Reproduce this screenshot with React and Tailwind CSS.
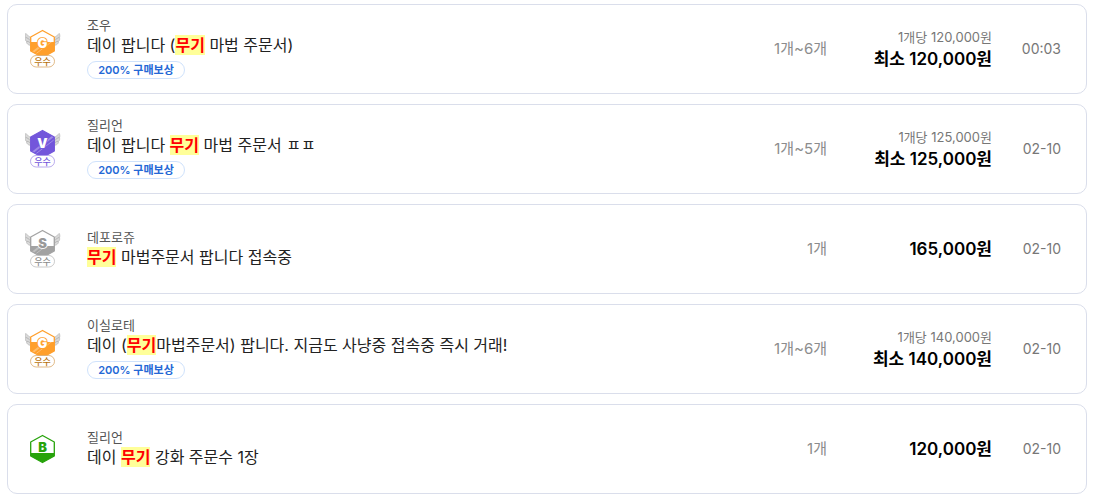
const LISTINGS = [
  {
    id: 1,
    grade: "gold",
    seller: "조우",
    title: ["데이 팝니다 (", "무기", " 마법 주문서)"],
    reward: true,
    quantity: "1개~6개",
    unitPrice: "1개당 120,000원",
    price: "최소 120,000원",
    date: "00:03",
  },
  {
    id: 2,
    grade: "vip",
    seller: "질리언",
    title: ["데이 팝니다 ", "무기", " 마법 주문서 ㅍㅍ"],
    reward: true,
    quantity: "1개~5개",
    unitPrice: "1개당 125,000원",
    price: "최소 125,000원",
    date: "02-10",
  },
  {
    id: 3,
    grade: "silver",
    seller: "데포로쥬",
    title: ["", "무기", " 마법주문서 팝니다 접속중"],
    quantity: "1개",
    price: "165,000원",
    date: "02-10",
  },
  {
    id: 4,
    grade: "gold",
    seller: "이실로테",
    title: ["데이 (", "무기", "마법주문서) 팝니다. 지금도 사냥중 접속중 즉시 거래!"],
    reward: true,
    quantity: "1개~6개",
    unitPrice: "1개당 140,000원",
    price: "최소 140,000원",
    date: "02-10",
  },
  {
    id: 5,
    grade: "bronze",
    seller: "질리언",
    title: ["데이 ", "무기", " 강화 주문수 1장"],
    quantity: "1개",
    price: "120,000원",
    date: "02-10",
  },
];

// level = y where the solid part of the hexagon starts
const GRADES = {
  gold: { letter: "G", color: "#ff9f2b", ink: "#fff", outline: "#ff9f2b", label: "#b8730f", line: "#d9a869", level: 13, excellent: true },
  vip: { letter: "V", color: "#7357db", ink: "#fff", outline: "#7357db", label: "#7357db", line: "#a796e8", level: 0, excellent: true },
  silver: { letter: "S", color: "#a3a3a3", ink: "#999", outline: "#fff", label: "#8c8c8c", line: "#bdbdbd", level: 17, excellent: true },
  bronze: { letter: "B", color: "#27a30b", ink: "#27a30b", outline: "#fff", level: 19 },
};

const HEXAGON = "M17.5 1.5 L29.3 8 V22 L17.5 28.5 L5.7 22 V8 Z";

const Wing = () => (
  <g>
    <path
      d="M7 16.5 C3 16.5 1.2 14.2 1.6 12.6 C.4 11.8 .1 10 .5 8.8 C-.1 7.2 .2 5.2 .8 4.4 C1.8 6.4 4.8 7 6.2 9.6 Z"
      fill="#d9d9d9"
      stroke="#b3b3b3"
      strokeWidth="0.7"
    />
    <path d="M.8 8.4 Q3.2 9.2 4.8 11 M1.7 12.2 Q3.8 12.4 5 13.6" fill="none" stroke="#a6a6a6" strokeWidth="0.7" />
  </g>
);

const GradeBadge = ({ id, grade }) => {
  const { letter, color, ink, outline, label, line, level, excellent } = GRADES[grade];
  const hexClip = `hex-${id}`;
  const lowerClip = `lower-${id}`;

  return (
    <svg
      viewBox={excellent ? "0 0 36 40" : "0 -5 36 40"}
      className="h-10 w-9 shrink-0"
      role="img"
      aria-label={`${letter} 등급`}
    >
      <clipPath id={hexClip}>
        <path d={HEXAGON} />
      </clipPath>
      <clipPath id={lowerClip}>
        <rect x="0" y={level} width="36" height="30" />
      </clipPath>

      {excellent && (
        <>
          <Wing />
          <g transform="matrix(-1 0 0 1 35 0)">
            <Wing />
          </g>
        </>
      )}

      <path d={HEXAGON} fill="#fff" />
      <g clipPath={`url(#${hexClip})`}>
        <rect x="0" y={level} width="36" height="30" fill={color} />
        {excellent && (
          <g clipPath={`url(#${lowerClip})`} stroke="#fff" opacity="0.3">
            <path d="M3 27 L31 5" strokeWidth="2" />
            <path d="M8 27 L34 7" strokeWidth="1" />
          </g>
        )}
      </g>
      <path d={HEXAGON} fill="none" stroke={color} strokeWidth="1.3" strokeLinejoin="round" />

      <text
        x="17.5"
        y={excellent ? 19 : 18}
        textAnchor="middle"
        fontSize="13"
        fontWeight="900"
        fontFamily="Inter, sans-serif"
        fill={ink}
        stroke={outline}
        strokeWidth="1.6"
        paintOrder="stroke"
      >
        {letter}
      </text>

      {excellent && (
        <>
          <rect x="5.5" y="26.5" width="24" height="11.5" rx="5.7" fill="#fff" stroke={line} strokeWidth="0.8" />
          <text
            x="17.5"
            y="35.6"
            textAnchor="middle"
            fontSize="9"
            fontWeight="500"
            fontFamily="'Noto Sans CJK KR', sans-serif"
            fill={label}
          >
            우수
          </text>
        </>
      )}
    </svg>
  );
};

const ListingCard = ({ item }) => {
  const [before, keyword, after] = item.title;

  return (
    <li>
      <a
        href="#"
        className="flex h-[90px] items-center rounded-[10px] border border-[#dadeeb] bg-white pr-[25px] pl-[17px]"
      >
        <GradeBadge id={item.id} grade={item.grade} />

        <div className="ml-[26px] min-w-0 flex-1">
          <p className="text-[13px] leading-4 text-[#555]">{item.seller}</p>
          <p className="truncate text-base leading-6 text-[#222]">
            {before}
            <mark className="bg-[#ffff99] font-bold text-[#f00]">{keyword}</mark>
            {after}
          </p>
          {item.reward && (
            <span className="mt-1 mb-0.5 flex h-[18px] w-[98px] items-center justify-center rounded-full border border-[#cfe2fc] text-[11px] leading-none font-semibold text-[#2468d6]">
              200% 구매보상
            </span>
          )}
        </div>

        <p className="w-24 shrink-0 text-right text-[15px] text-[#8c8c8c]">{item.quantity}</p>

        <div className="w-[165px] shrink-0 text-right">
          {item.unitPrice && <p className="text-[13px] leading-5 text-[#777]">{item.unitPrice}</p>}
          <p className="text-[17px] leading-6 font-semibold text-black">{item.price}</p>
        </div>

        <time className="w-[69px] shrink-0 text-right text-sm text-[#777]">{item.date}</time>
      </a>
    </li>
  );
};

const App = () => (
  <main className="bg-white py-1 pr-2 pl-[7px] font-[Inter,'Noto_Sans_CJK_KR',sans-serif]">
    <ul className="flex flex-col gap-2.5">
      {LISTINGS.map((item) => (
        <ListingCard key={item.id} item={item} />
      ))}
    </ul>
  </main>
);

export default App;
